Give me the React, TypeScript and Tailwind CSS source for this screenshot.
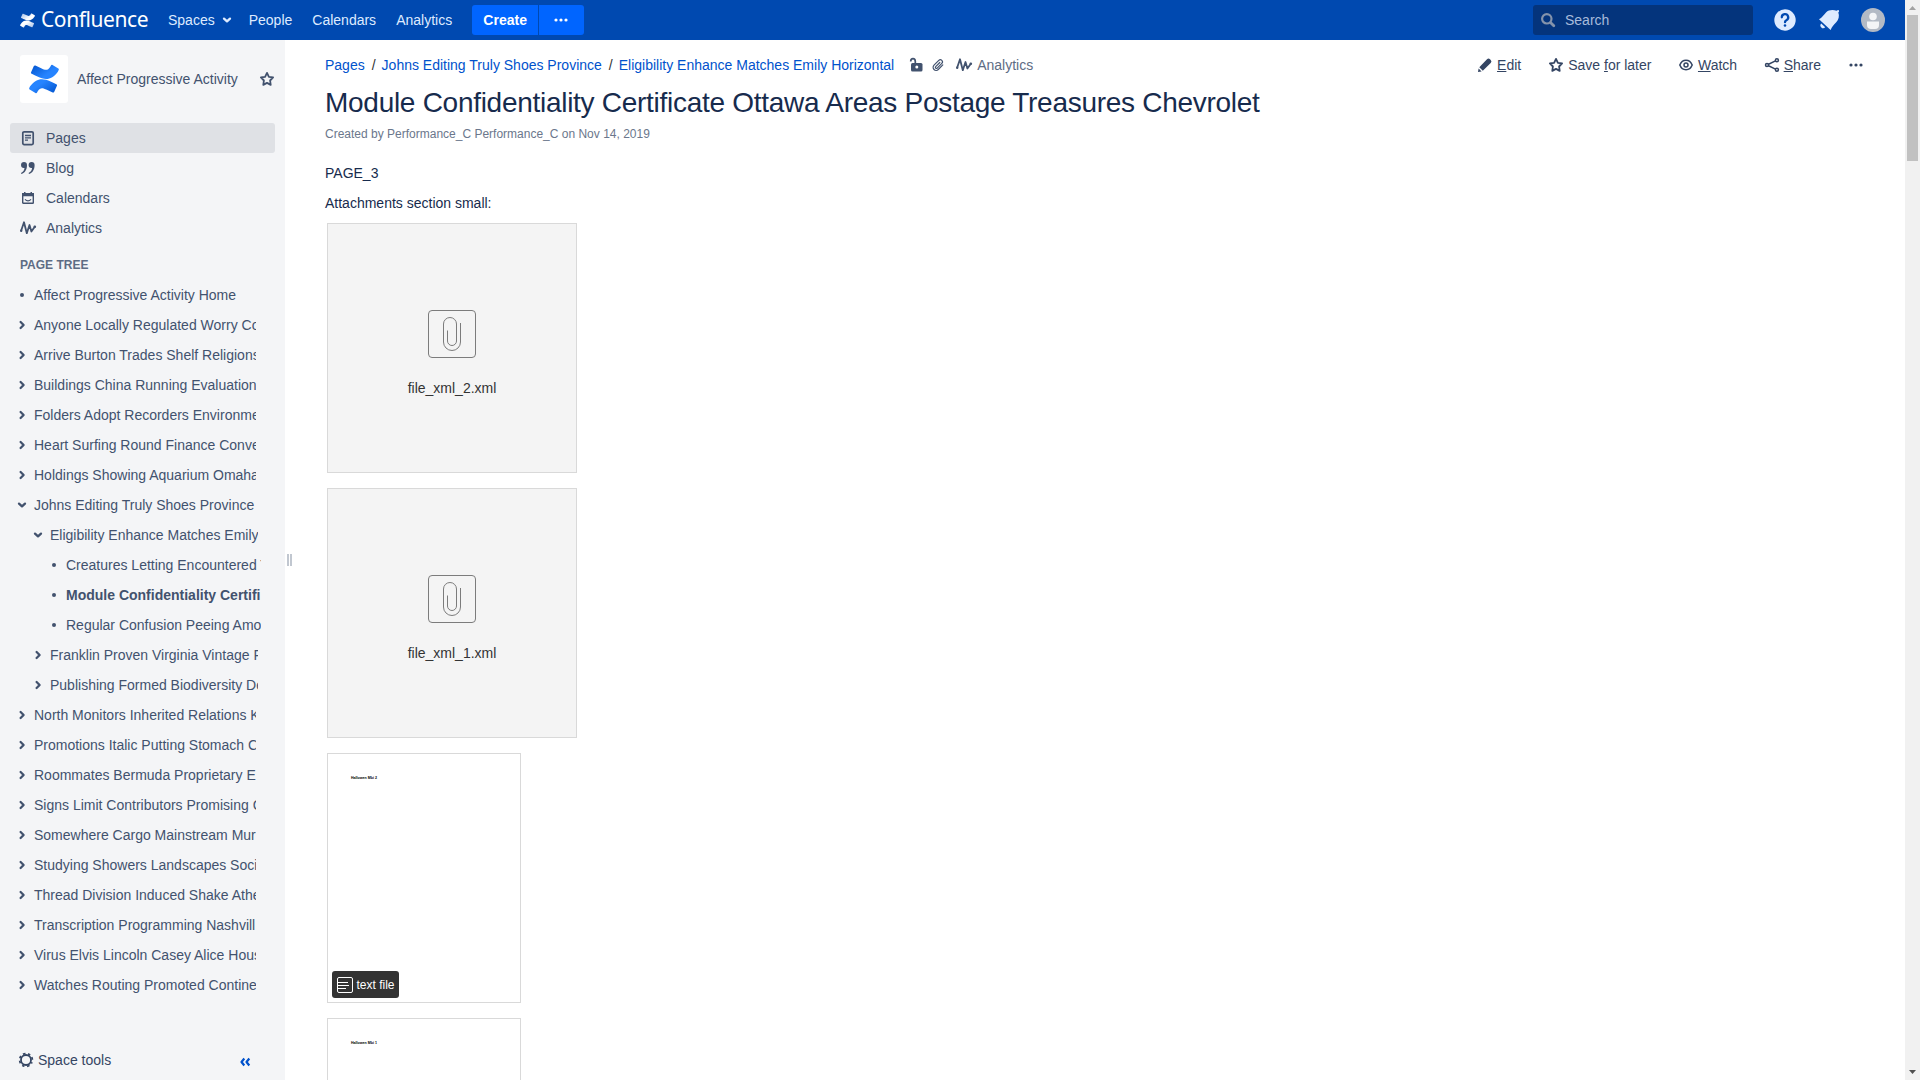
import React from "react";

const tree: { t: string; l: 0 | 1 | 2; k: "dot" | "right" | "down"; b?: boolean }[] = [
  { t: "Affect Progressive Activity Home", l: 0, k: "dot" },
  { t: "Anyone Locally Regulated Worry Co", l: 0, k: "right" },
  { t: "Arrive Burton Trades Shelf Religions", l: 0, k: "right" },
  { t: "Buildings China Running Evaluation", l: 0, k: "right" },
  { t: "Folders Adopt Recorders Environme", l: 0, k: "right" },
  { t: "Heart Surfing Round Finance Conve", l: 0, k: "right" },
  { t: "Holdings Showing Aquarium Omaha", l: 0, k: "right" },
  { t: "Johns Editing Truly Shoes Province", l: 0, k: "down" },
  { t: "Eligibility Enhance Matches Emily", l: 1, k: "down" },
  { t: "Creatures Letting Encountered T", l: 2, k: "dot" },
  { t: "Module Confidentiality Certifi", l: 2, k: "dot", b: true },
  { t: "Regular Confusion Peeing Amo", l: 2, k: "dot" },
  { t: "Franklin Proven Virginia Vintage F", l: 1, k: "right" },
  { t: "Publishing Formed Biodiversity De", l: 1, k: "right" },
  { t: "North Monitors Inherited Relations K", l: 0, k: "right" },
  { t: "Promotions Italic Putting Stomach C", l: 0, k: "right" },
  { t: "Roommates Bermuda Proprietary E", l: 0, k: "right" },
  { t: "Signs Limit Contributors Promising C", l: 0, k: "right" },
  { t: "Somewhere Cargo Mainstream Mur", l: 0, k: "right" },
  { t: "Studying Showers Landscapes Soci", l: 0, k: "right" },
  { t: "Thread Division Induced Shake Athe", l: 0, k: "right" },
  { t: "Transcription Programming Nashvill", l: 0, k: "right" },
  { t: "Virus Elvis Lincoln Casey Alice Hous", l: 0, k: "right" },
  { t: "Watches Routing Promoted Contine", l: 0, k: "right" },
];

const indent = ["ml-[14px] w-[242px]", "ml-[30px] w-[228px]", "ml-[46px] w-[215px]"];

function TreeIcon({ k }: { k: string }) {
  return (
    <svg width="16" height="16" viewBox="0 0 16 16" className="shrink-0" fill="none" stroke="#42526e" strokeWidth="2.3" strokeLinecap="round" strokeLinejoin="round">
      {k === "dot" && <circle cx="8" cy="8" r="2" fill="#42526e" stroke="none" />}
      {k === "right" && <path d="M6.6 5 9.6 8 6.6 11" />}
      {k === "down" && <path d="M5 6.6 8 9.4 11 6.6" />}
    </svg>
  );
}

function Star() {
  return (
    <svg width="16" height="16" viewBox="0 0 16 16" fill="none" stroke="currentColor" strokeWidth="1.8" strokeLinejoin="round" className="shrink-0">
      <path d="M8 1.9 9.9 5.8 14.1 6.4 11.1 9.5 11.7 13.9 8 11.9 4.3 13.9 4.9 9.5 1.9 6.4 6.1 5.8Z" />
    </svg>
  );
}

function Pulse() {
  return (
    <svg width="16" height="16" viewBox="0 0 16 16" fill="none" stroke="currentColor" strokeWidth="1.8" strokeLinecap="round" strokeLinejoin="round" className="shrink-0 overflow-visible">
      <path d="M1.2 10.500 4 2.300 6.800 13.200 9.500 5 11.400 11.500 14.800 6.800" />
      <circle cx="1.2" cy="10.700" r="1.200" fill="currentColor" stroke="none" />
      <circle cx="14.800" cy="6.800" r="1.300" fill="currentColor" stroke="none" />
    </svg>
  );
}

function Dots() {
  return (
    <svg width="16" height="16" viewBox="0 0 16 16" fill="currentColor" className="shrink-0">
      <circle cx="3" cy="8" r="1.6" />
      <circle cx="8" cy="8" r="1.6" />
      <circle cx="13" cy="8" r="1.6" />
    </svg>
  );
}

function Mark({ id, size, from, to }: { id: string; size: number; from: string; to: string }) {
  return (
    <svg width={size} height={size} viewBox="0 0 32 32" className="shrink-0 overflow-visible">
      <defs>
        <linearGradient id={id + "a"} x1="0" y1="0" x2=".7" y2=".5">
          <stop offset="0" stopColor={from} />
          <stop offset="1" stopColor={to} />
        </linearGradient>
        <linearGradient id={id + "b"} x1="1" y1="1" x2=".3" y2=".5">
          <stop offset="0" stopColor={from} />
          <stop offset="1" stopColor={to} />
        </linearGradient>
      </defs>
      <path fill={`url(#${id}a)`} d="M30.8 8.2c.3-.6.6-1.200.9-1.700.3-.6.100-1.300-.4-1.600L25.100 1.100c-.6-.4-1.300-.2-1.700.4-.2.400-.6 1-.9 1.600-2.500 4.100-5 3.600-9.500 1.400L6.800 1.600c-.6-.3-1.300 0-1.600.6L2.200 8.900c-.3.600 0 1.300.6 1.600 1.300.6 3.900 1.800 6.200 2.900 8.400 4.100 15.500 3.800 21.800-5.200z" />
      <path fill={`url(#${id}b)`} d="M1.200 23.800c-.3.600-.6 1.200-.9 1.700-.3.600-.1 1.300.4 1.600l6.200 3.800c.6.400 1.300.2 1.700-.4.200-.4.600-1 .9-1.600 2.500-4.100 5-3.600 9.500-1.400l6.200 2.900c.6.300 1.300 0 1.600-.6l3-6.700c.3-.6 0-1.300-.6-1.600-1.300-.6-3.900-1.800-6.200-2.900-8.400-4-15.500-3.700-21.800 5.200z" />
    </svg>
  );
}

function PageIcon() {
  return (
    <svg width="16" height="16" viewBox="0 0 16 16" fill="none" stroke="currentColor">
      <rect x="2.800" y="1.800" width="10.400" height="12.800" rx="1.300" strokeWidth="1.700" />
      <path d="M5 5.500H11M5 7.800H11M5 10.100H8" strokeWidth="1.300" />
    </svg>
  );
}
function QuoteIcon() {
  return (
    <svg width="16" height="16" viewBox="0 0 16 16" fill="currentColor">
      <path d="M1 5a3 3 0 0 1 6 0c0 4.500-2 8-5.600 9l-.4-1C3.200 12 4.300 10.300 4.500 8 2.500 8.500 1 7 1 5zM8.600 5a3 3 0 0 1 6 0c0 4.500-2 8-5.600 9l-.4-1c2.200-1 3.300-2.700 3.500-5-2 .5-3.500-1-3.500-3z" />
    </svg>
  );
}
function CalIcon() {
  return (
    <svg width="16" height="16" viewBox="0 0 16 16" fill="none" stroke="currentColor">
      <rect x="2.700" y="4" width="10.600" height="9.300" rx=".6" strokeWidth="1.400" />
      <path d="M2 3h12v3.200H2zM4 2h1.500v2H4zM10.500 2H12v2h-1.500z" fill="currentColor" stroke="none" />
      <path d="M5 9.300Q8 12.300 11 9.300" strokeWidth="1.200" />
    </svg>
  );
}

function XmlCard({ name }: { name: string }) {
  return (
    <div className="mb-[15px] flex h-[250px] w-[250px] flex-col items-center border border-[#d9d9d9] bg-[#f4f4f4] pt-[86px]">
      <svg width="48" height="48" viewBox="0 0 48 48" fill="none" stroke="#7c7c7c">
        <rect x=".5" y=".5" width="47" height="47" rx="3.500" />
        <path d="M19.500 20.500V31a4.500 4.500 0 0 0 9 0V14a6.500 6.500 0 0 0-13 0V32a8.500 8.500 0 0 0 17 0V13" />
      </svg>
      <div className="mt-[20px] text-sm leading-5 text-[#333]">{name}</div>
    </div>
  );
}

function TextCard({ label }: { label: string }) {
  return (
    <div className="relative mb-[15px] h-[250px] w-[194px] border border-[#d9d9d9] bg-white">
      <div className="pt-[22px] pl-[23px] text-[3.600px] leading-[5px] font-bold text-black">{label}</div>
      <div className="absolute bottom-1 left-1 flex h-[27px] w-[67px] items-center rounded-[3px] bg-[#333] pl-[5px] text-xs text-white">
        <svg width="16" height="16" viewBox="0 0 16 16" fill="none" stroke="#fff">
          <rect x=".5" y=".5" width="15" height="15" rx="1.500" />
          <path d="M1 5.500H11M1 8.500H12M1 11.500H9" />
        </svg>
        <span className="ml-[3.500px] whitespace-nowrap">text file</span>
      </div>
    </div>
  );
}

const side = [
  { t: "Pages", i: <PageIcon /> },
  { t: "Blog", i: <QuoteIcon /> },
  { t: "Calendars", i: <CalIcon /> },
  { t: "Analytics", i: <Pulse /> },
];

export default function App() {
  return (
    <div className="flex h-[1080px] w-[1920px] overflow-hidden bg-white font-['Liberation_Sans',Arial,sans-serif] text-sm leading-5 text-[#172b4d]">
      <div className="flex w-[1905px] flex-col">
        <header className="flex h-10 shrink-0 items-center bg-[#0049b0] text-[#deebff]">
          <div className="ml-5 flex h-10 w-[148px] items-center">
            <Mark id="w" size={15} from="#9fbce6" to="#ffffff" />
            <span className="ml-[6px] pb-[2px] font-['Noto_Sans',sans-serif] text-[21px] leading-[38px] tracking-[-0.420px] text-white">Confluence</span>
          </div>
          <span>Spaces</span>
          <svg width="16" height="16" viewBox="0 0 16 16" fill="none" stroke="currentColor" strokeWidth="2.300" strokeLinecap="round" strokeLinejoin="round" className="ml-1">
            <path d="M5 6.600 8 9.400 11 6.600" />
          </svg>
          <span className="ml-[14px]">People</span>
          <span className="ml-5">Calendars</span>
          <span className="ml-5">Analytics</span>
          <div className="ml-5 flex h-[30px] items-center gap-px font-bold text-white">
            <span className="flex h-full w-[66px] items-center justify-center rounded-l-[3px] bg-[#0065ff]">Create</span>
            <span className="flex h-full w-[45px] items-center rounded-r-[3px] bg-[#0065ff] pl-[14px]"><Dots /></span>
          </div>
          <div className="ml-auto flex h-[30px] w-[220px] items-center rounded-[3px] bg-[#04347c] pl-[7px] text-[#a7bbdb]">
            <svg width="16" height="16" viewBox="0 0 16 16" fill="none" stroke="#8493ab" strokeWidth="2.200">
              <circle cx="6.800" cy="6.800" r="4.700" />
              <path d="M10.700 10.700 13.800 13.800" strokeWidth="2.800" strokeLinecap="round" />
            </svg>
            <span className="ml-[9px]">Search</span>
          </div>
          <svg width="24" height="24" viewBox="0 0 24 24" className="ml-5">
            <circle cx="12" cy="12" r="10.700" fill="#deebff" />
            <path d="M8.800 9.300a3.200 3.200 0 1 1 4.600 2.900c-1 .5-1.400 1-1.400 2" fill="none" stroke="#0049b0" strokeWidth="2.300" strokeLinecap="round" />
            <circle cx="12" cy="17.500" r="1.300" fill="#0049b0" />
          </svg>
          <svg width="24" height="24" viewBox="0 0 24 24" className="ml-5" fill="#deebff">
            <path d="M2 11.300C5 9.500 6.500 7.500 9 4.500 11.500 2 15.500 1.500 19.500 2.700Q21.500 1.500 22 2.500T21.300 4.500C22.600 8 21.800 11.500 19 14.500 16.500 17 15 18.800 13.600 22z" />
            <path d="M4.200 15.600 8.200 19.300A2.600 2.600 0 1 1 4.200 15.600z" />
          </svg>
          <svg width="24" height="24" viewBox="0 0 24 24" className="mr-5 ml-5">
            <circle cx="12" cy="12" r="12" fill="#b3bac5" />
            <circle cx="12" cy="8.500" r="3.800" fill="#f4f5f7" />
            <path d="M6 13.500h12V17q0 4-4 4h-4q-4 0-4-4z" fill="#f4f5f7" />
          </svg>
        </header>

        <div className="flex min-h-0 flex-1">
          <aside className="flex w-[285px] shrink-0 flex-col bg-[#f4f5f7] text-[#42526e]">
            <div className="mt-[15px] flex h-12 items-center pl-5">
              <div className="flex h-12 w-12 items-center justify-center rounded-[3px] bg-white">
                <Mark id="b" size={30} from="#0052cc" to="#2684ff" />
              </div>
              <span className="ml-[9px] w-[182px]">Affect Progressive Activity</span>
              <Star />
            </div>
            <nav className="mt-5 px-[10px]">
              {side.map((s, i) => (
                <div key={s.t} className={i === 0 ? "flex h-[30px] items-center rounded-[3px] bg-[#dfe1e5] pl-[10px]" : "flex h-[30px] items-center pl-[10px]"}>
                  {s.i}
                  <span className="ml-[10px]">{s.t}</span>
                </div>
              ))}
            </nav>
            <div className="mt-3 pl-5 text-xs leading-5 font-bold text-[#5e6c84]">PAGE TREE</div>
            <div className="mt-[5px]">
              {tree.map((n) => (
                <div key={n.t} className={`flex h-[30px] items-center overflow-hidden ${indent[n.l]}`}>
                  <TreeIcon k={n.k} />
                  <span className={n.b ? "ml-1 font-bold whitespace-nowrap" : "ml-1 whitespace-nowrap"}>{n.t}</span>
                </div>
              ))}
            </div>
            <div className="mt-auto flex h-10 items-center pl-[18px] text-[#344563]">
              <svg width="16" height="16" viewBox="0 0 16 16" fill="none" stroke="currentColor">
                <circle cx="8" cy="8" r="5" strokeWidth="1.800" />
                <circle cx="8" cy="8" r="6.400" strokeWidth="1.700" strokeDasharray="2.500 2.527" strokeDashoffset="1.250" transform="rotate(22.500 8 8)" />
              </svg>
              <span className="ml-1">Space tools</span>
              <svg width="16" height="16" viewBox="0 0 16 16" fill="none" stroke="#0052cc" strokeWidth="2.200" strokeLinejoin="round" className="mt-1 ml-auto mr-8">
                <path d="M7.300 4.500 4.500 8l2.800 3.500M12.300 4.500 9.500 8l2.800 3.500" />
              </svg>
            </div>
          </aside>
          <div className="flex w-[8px] items-center justify-center gap-px">
            <i className="h-3 w-[2px] bg-[#c1c7d0]" />
            <i className="h-3 w-[2px] bg-[#c1c7d0]" />
          </div>
          <main className="min-w-0 flex-1 pl-8">
            <div className="mt-[15px] flex h-5 items-center">
              <span className="text-[#0052cc]">Pages</span>
              <span className="mr-[6px] ml-[7px] text-[#333]">/</span>
              <span className="text-[#0052cc]">Johns Editing Truly Shoes Province</span>
              <span className="mr-[6px] ml-[7px] text-[#333]">/</span>
              <span className="text-[#0052cc]">Eligibility Enhance Matches Emily Horizontal</span>
              <div className="ml-[14px] flex items-center text-[#42526e]">
                <svg width="16" height="16" viewBox="0 0 16 16">
                  <rect x="3" y="6" width="11.500" height="8.500" rx="1.500" fill="currentColor" />
                  <path d="M2.700 4.500Q2.700 1.600 5 1.600T7.300 4.500V7" fill="none" stroke="currentColor" strokeWidth="1.700" />
                  <circle cx="8.800" cy="10" r="1.500" fill="#fff" />
                </svg>
                <svg width="16" height="16" viewBox="0 0 16 16" className="ml-[6px]" fill="none" stroke="currentColor" strokeWidth="1.200" strokeLinecap="round">
                  <path d="M9.800 5.500 5.700 9.600a1 1 0 0 0 1.500 1.500l4.600-4.700a2.100 2.100 0 0 0-3-3L4 8.200a3 3 0 0 0 4.300 4.300l4.500-4.600" />
                </svg>
                <span className="ml-[10px] flex"><Pulse /></span>
                <span className="ml-[5px] text-[#5e6c84]">Analytics</span>
              </div>
              <div className="mr-[41px] ml-auto flex items-center text-[#344563]">
                <svg width="16" height="16" viewBox="0 0 16 16" fill="currentColor">
                  <path d="M1 15 1.600 11.400 4.600 14.400zM2.300 10.200 10 2.300q1.500-1.500 3 0l.7.700q1.500 1.500 0 3L5.800 13.700z" />
                </svg>
                <span className="ml-1"><u>E</u>dit</span>
                <span className="ml-[27px] flex"><Star /></span>
                <span className="ml-1">Save <u>f</u>or later</span>
                <svg width="16" height="16" viewBox="0 0 16 16" fill="none" stroke="currentColor" strokeWidth="1.500" className="ml-[26.500px]">
                  <path d="M1.800 8C3 5 5.300 3.300 8 3.300S13 5 14.200 8C13 11 10.700 12.700 8 12.700S3 11 1.800 8z" />
                  <circle cx="8" cy="8" r="2" />
                </svg>
                <span className="ml-1"><u>W</u>atch</span>
                <svg width="16" height="16" viewBox="0 0 16 16" fill="none" stroke="currentColor" strokeWidth="1.500" className="ml-[26.500px]">
                  <path d="M3 8 12.500 3.300M3 8l9.500 4.700" />
                  <circle cx="3" cy="8" r="1.500" fill="#fff" />
                  <circle cx="12.900" cy="3.200" r="1.500" fill="#fff" />
                  <circle cx="12.900" cy="12.800" r="1.500" fill="#fff" />
                </svg>
                <span className="ml-1"><u>S</u>hare</span>
                <span className="ml-[27px] flex"><Dots /></span>
              </div>
            </div>
            <h1 className="mt-3 text-[28px] leading-8 tracking-[-0.280px]">Module Confidentiality Certificate Ottawa Areas Postage Treasures Chevrolet</h1>
            <div className="mt-[5px] text-xs leading-5 text-[#6b778c]">Created by Performance_C Performance_C on Nov 14, 2019</div>
            <p className="mt-[19px]">PAGE_3</p>
            <p className="mt-[10px]">Attachments section small:</p>
            <div className="mt-[10px] ml-[2px]">
              <XmlCard name="file_xml_2.xml" />
              <XmlCard name="file_xml_1.xml" />
              <TextCard label="Hallowen Mbi 2" />
              <TextCard label="Hallowen Mbi 1" />
            </div>
          </main>
        </div>
      </div>
      <div className="flex w-[15px] flex-col items-center justify-between bg-[#f1f1f1]">
        <div className="flex flex-col items-center">
          <svg width="15" height="15" viewBox="0 0 15 15"><path d="M4 10 7.500 6 11 10z" fill="#a3a3a3" /></svg>
          <div className="h-[146px] w-[11px] bg-[#c1c1c1]" />
        </div>
        <svg width="15" height="15" viewBox="0 0 15 15"><path d="M4 5 7.500 9 11 5z" fill="#505050" /></svg>
      </div>
    </div>
  );
}
